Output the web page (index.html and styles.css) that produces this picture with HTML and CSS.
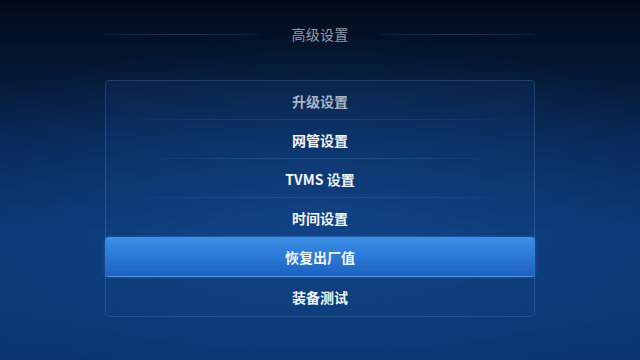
FILE: index.html
```html
<!DOCTYPE html>
<html lang="zh">
<head>
<meta charset="utf-8">
<link rel="stylesheet" href="styles.css">
</head>
<body>
<div class="screen">
  <header class="title-row">
    <span class="rule"></span>
    <h1 class="title">高级设置</h1>
    <span class="rule"></span>
  </header>
  <ul class="menu">
    <li class="item dim">升级设置</li>
    <li class="item">网管设置</li>
    <li class="item">TVMS 设置</li>
    <li class="item">时间设置</li>
    <li class="item active">恢复出厂值</li>
    <li class="item last">装备测试</li>
  </ul>
</div>
</body>
</html>
```
FILE: styles.css
```css
html, body {
  margin: 0;
  padding: 0;
}
body {
  width: 640px;
  height: 360px;
  overflow: hidden;
  font-family: "Noto Sans CJK SC", "Liberation Sans", sans-serif;
}
.screen {
  width: 640px;
  height: 360px;
  box-sizing: border-box;
  padding-top: 24px;
  background:
    radial-gradient(ellipse 70% 50% at 50% 60%, rgba(20, 80, 160, 0.45), rgba(20, 80, 160, 0) 100%),
    linear-gradient(to bottom, #020a18 0%, #041631 18%, #082857 42%, #0b3772 65%, #0b3873 85%, #0a3570 100%);
}
.title-row {
  display: flex;
  align-items: center;
  width: 430px;
  margin: 0 auto;
  gap: 32px;
  height: 20px;
}
.rule {
  flex: 1;
  height: 1px;
  background: linear-gradient(to right, rgba(90, 120, 160, 0.12), rgba(110, 140, 180, 0.3) 50%, rgba(90, 120, 160, 0.12));
}
.title {
  margin: 0;
  font-size: 14px;
  font-weight: 400;
  color: #939cab;
  line-height: 20px;
  letter-spacing: 0.3px;
}
.menu {
  list-style: none;
  margin: 36px auto 0;
  padding: 0;
  width: 430px;
  box-sizing: border-box;
  border: 1px solid rgba(110, 160, 225, 0.24);
  border-radius: 5px;
  background: rgba(25, 70, 135, 0.12);
}
.item {
  height: 39px;
  display: flex;
  align-items: center;
  justify-content: center;
  font-size: 14px;
  font-weight: 700;
  color: #f2f6fb;
  position: relative;
}
.item::after {
  content: "";
  position: absolute;
  left: 20px;
  right: 20px;
  bottom: 0;
  height: 1px;
  background: linear-gradient(to right, rgba(140, 180, 230, 0), rgba(140, 180, 230, 0.14) 30%, rgba(140, 180, 230, 0.14) 70%, rgba(140, 180, 230, 0));
}
.item.last::after,
.item.active::after {
  display: none;
}
.item.dim {
  color: #aab5c4;
}
.item.active {
  margin: 0 -1px;
  border-radius: 4px;
  background: linear-gradient(to bottom, #3d90e6 0%, #2c7bd8 45%, #1d62c0 100%);
  border-bottom: 1px solid #4a9ae8;
  box-sizing: border-box;
  height: 40px;
  box-shadow: 0 0 3px rgba(60, 140, 230, 0.5);
}
```
